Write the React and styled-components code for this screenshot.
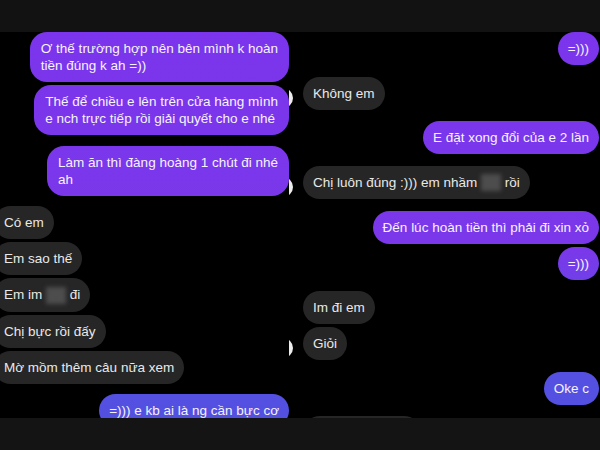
import styled, { createGlobalStyle } from "styled-components";

const Global = createGlobalStyle`
    html, body {
        margin: 0;
        padding: 0;
        background: #000;
    }
`;

const leftMessages = [
    { id: 1, group: 1, out: true, lines: ["Ơ thế trường hợp nên bên mình k hoàn", "tiền đúng k ah =))"] },
    { id: 2, group: 1, out: true, lines: ["Thế để chiều e lên trên cửa hàng mình", "e nch trực tiếp rồi giải quyết cho e nhé"] },
    { id: 3, group: 2, out: true, lines: ["Làm ăn thì đàng hoàng 1 chút đi nhé", "ah"] },
    { id: 4, group: 3, lines: ["Có em"] },
    { id: 5, group: 3, lines: ["Em sao thế"] },
    { id: 6, group: 3, lines: [["Em im ", 20, " đi"]] },
    { id: 7, group: 3, lines: ["Chị bực rồi đấy"] },
    { id: 8, group: 3, lines: ["Mờ mồm thêm câu nữa xem"] },
    { id: 9, group: 4, out: true, lines: ["=))) e kb ai là ng cần bực cơ"] },
];

const rightMessages = [
    { id: 1, group: 1, out: true, lines: ["=)))"] },
    { id: 2, group: 2, lines: ["Không em"] },
    { id: 3, group: 3, out: true, lines: ["E đặt xong đổi của e 2 lần"] },
    { id: 4, group: 4, lines: [["Chị luôn đúng :))) em nhầm ", 20, " rồi"]] },
    { id: 5, group: 5, out: true, lines: ["Đến lúc hoàn tiền thì phải đi xin xỏ"] },
    { id: 6, group: 5, out: true, lines: ["=)))"] },
    { id: 7, group: 6, lines: ["Im đi em"] },
    { id: 8, group: 6, lines: ["Giỏi"] },
    { id: 9, group: 7, out: true, lines: ["Oke c"] },
    { id: 10, group: 8, lines: [], width: 98 },
];

const Page = styled.div`
    width: 600px;
    height: 450px;
    display: flex;
    flex-direction: column;
    background: #000;
    overflow: hidden;
    font-family: "Liberation Sans", Arial, sans-serif;
`;

const Band = styled.div`
    height: 32px;
    flex-shrink: 0;
    background: ${props => props.$color};
`;

const Screens = styled.div`
    flex: 1;
    min-height: 0;
    display: grid;
    grid-template-columns: 289px 1fr;
    overflow: hidden;
`;

const Column = styled.div`
    display: flex;
    flex-direction: column;
    gap: ${props => props.$gap}px;
    min-height: 0;
    overflow: hidden;
    padding-right: ${props => props.$edge}px;
`;

const Group = styled.div`
    display: flex;
    flex-direction: column;
    gap: 3px;
`;

const Row = styled.div`
    display: flex;
    align-items: flex-end;
    justify-content: ${props => (props.$out ? "flex-end" : "flex-start")};
    margin-left: ${props => props.$shift}px;
`;

const Avatar = styled.div`
    width: 20px;
    height: 20px;
    flex-shrink: 0;
    border-radius: 50%;
    background: #ececec;
    margin: 0 10px 2px -16px;
    visibility: ${props => (props.$show ? "visible" : "hidden")};
`;

const Bubble = styled.div`
    padding: 8px ${props => (props.$wide ? 11 : 10)}px;
    border-radius: 17px;
    font-size: 13.5px;
    line-height: 17px;
    white-space: nowrap;
    color: ${props => (props.$out ? "#f6f2ff" : "#e9e9e9")};
    background: ${props =>
        props.$out
            ? "linear-gradient(180deg, #7b34ec 0px, #7a38ea 250px, #6a44e7 300px, #5650e2 360px, #5150e0 450px) fixed"
            : "#262626"};
`;

const Blur = styled.span`
    display: inline-block;
    width: ${props => props.$w}px;
    height: 17px;
    vertical-align: middle;
    background: #4d4d4d;
    filter: blur(2px);
`;

function Line({ line }) {
    if (typeof line === "string") return line;
    return (
        <>
            {line[0]}
            <Blur $w={line[1]} />
            {line[2]}
        </>
    );
}

function groupBy(messages) {
    const groups = [];
    messages.forEach(m => {
        const last = groups[groups.length - 1];
        if (last && last.id === m.group) last.items.push(m);
        else groups.push({ id: m.group, items: [m] });
    });
    return groups;
}

function Chat({ messages, gap, shift, avatars, edge }) {
    return (
        <Column $gap={gap} $edge={edge}>
            {groupBy(messages).map(group => (
                <Group key={group.id}>
                    {group.items.map((msg, i) => (
                        <Row key={msg.id} $out={msg.out} $shift={msg.out ? 0 : shift}>
                            {avatars && !msg.out && (
                                <Avatar $show={i === group.items.length - 1 && msg.lines.length > 0} />
                            )}
                            <Bubble
                                $out={msg.out}
                                $wide={msg.lines.length > 1}
                                style={msg.width ? { width: msg.width, height: 33 } : undefined}
                            >
                                {msg.lines.map((line, j) => (
                                    <div key={j}>
                                        <Line line={line} />
                                    </div>
                                ))}
                            </Bubble>
                        </Row>
                    ))}
                </Group>
            ))}
        </Column>
    );
}

export default function App() {
    return (
        <>
            <Global />
            <Page>
                <Band $color="#121212" />
                <Screens>
                    <Chat messages={leftMessages} gap={10.5} shift={-6} edge={0} />
                    <Chat messages={rightMessages} gap={11.5} shift={0} avatars edge={1} />
                </Screens>
                <Band $color="#141414" />
            </Page>
        </>
    );
}
